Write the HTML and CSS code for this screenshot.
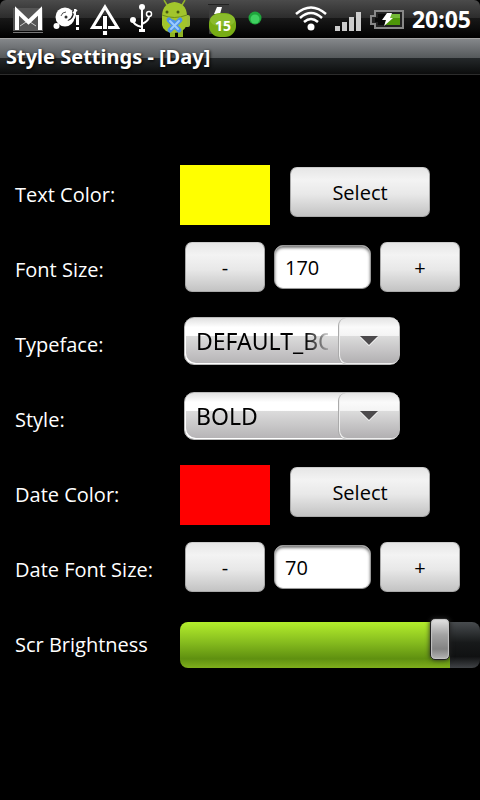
FILE: index.html
```html
<!DOCTYPE html>
<html lang="en">
<head>
    <meta charset="UTF-8">
    <meta name="viewport" content="width=device-width, initial-scale=1.0">
    <title>Style Settings</title>

    <link rel="stylesheet" href="styles.css">

</head>
<body>

    <div class="status-bar">

        <div class="notifications">
            <!-- mail -->
            <svg width="32" height="38" viewBox="12 0 32 38">
                <rect x="13" y="8" width="30" height="23" fill="#555"/>
                <path d="M13 32.500h30" stroke="#777" stroke-width="1"/>
                <path d="M20 26l6-4M36 26l-6-4" stroke="#ccc" stroke-width="1"/>
                <path d="M17 30V11l11.500 11L40 11v19" fill="none" stroke="#fff" stroke-width="4"/>
            </svg>
            <!-- disc warning -->
            <svg width="29" height="38" viewBox="52 0 29 38">
                <circle cx="65" cy="17" r="9.500" fill="#fff"/>
                <path d="M61 16q1-4 5-4" fill="none" stroke="#555" stroke-width="1"/>
                <circle cx="66" cy="17" r="1.500" fill="#333"/>
                <path d="M73 11v4q-1 4-5 6" fill="none" stroke="#222" stroke-width="1.500"/>
                <path d="M75 9v6q-1 5-7 7M73 13l4-3" fill="none" stroke="#fff" stroke-width="2"/>
                <circle cx="56.500" cy="26" r="3" fill="#fff"/>
                <path d="M77.500 15v10M77.500 27v3" stroke="#fff" stroke-width="3"/>
            </svg>
            <!-- alert -->
            <svg width="32" height="38" viewBox="89 0 32 38">
                <path d="M105 7l12.500 20.500h-25z" fill="none" stroke="#fff" stroke-width="3"/>
                <path d="M105 15v20" stroke="#111" stroke-width="6"/>
                <path d="M105 16v13M105 31v4" stroke="#fff" stroke-width="4"/>
            </svg>
            <!-- usb -->
            <svg width="24" height="38" viewBox="129 0 24 38">
                <path d="M142 6v25M133 20q0 5 9 7M149 14v2q0 5-7 8" fill="none" stroke="#fff" stroke-width="2"/>
                <circle cx="142" cy="7" r="3" fill="#fff"/>
                <circle cx="133" cy="20" r="3" fill="#fff"/>
                <circle cx="149" cy="14" r="2.500" fill="#111" stroke="#fff" stroke-width="1.500"/>
                <path d="M139 30.500h6" stroke="#fff" stroke-width="3"/>
            </svg>
            <!-- robot -->
            <svg width="38" height="38" viewBox="161 0 38 38">
                <path d="M167 5l-3-5M182 5l3-5" stroke="#93b52a" stroke-width="1.500"/>
                <rect x="184" y="15" width="6" height="12" rx="2" fill="#9cbd3c"/>
                <path d="M170 28h5v9h-5zM178 28h5v9h-5z" fill="#8fb424"/>
                <path d="M162 15q1-12 12.500-13Q186 3 187 15v10q-4 8-13 8-11-1-12-8z" fill="#a2c52c"/>
                <path d="M162 15q12 5 25 0" fill="none" stroke="#6f8f1a" stroke-width="1"/>
                <circle cx="167" cy="12" r="1.500" fill="#465b12"/>
                <circle cx="178" cy="12" r="1.500" fill="#465b12"/>
                <path d="M169 20l5 2" stroke="#4f94e8" stroke-width="4" stroke-linecap="round"/>
                <path d="M169 20l10 10M180 20l-10 10" stroke="#4f94e8" stroke-width="5" stroke-linecap="round"/>
                <path d="M170 21l8 8M179 21l-8 8" stroke="#9ccbff" stroke-width="2" stroke-linecap="round"/>
            </svg>
            <!-- battery level badge -->
            <svg width="30" height="38" viewBox="207 0 30 38">
                <rect x="209" y="5" width="20" height="29" rx="1" fill="#3c3c3c"/>
                <path d="M208 4.500h21" stroke="#222" stroke-width="1"/>
                <path d="M217 7h5l-2 7h-6z" fill="#fff"/>
                <rect x="209" y="13" width="27" height="24" rx="11" fill="#78ad15"/>
                <rect x="210" y="14" width="25" height="12" rx="9" fill="#8abb2c"/>
                <text x="223" y="31" class="badge-text">15</text>
            </svg>
            <!-- online dot -->
            <svg width="17" height="38" viewBox="245 0 17 38">
                <circle cx="255" cy="18" r="6.500" fill="#1fa53c"/>
                <circle cx="255" cy="19" r="4.500" fill="#3fd060"/>
            </svg>
        </div>

        <div class="system-icons">
            <!-- wifi -->
            <svg width="32" height="38" viewBox="295 0 32 38">
                <circle cx="311" cy="27" r="3.500" fill="#fff"/>
                <path d="M296 14q15-13 30 0M300 18q11-10 22 0M304 22q7-6 14 0" fill="none" stroke="#fff" stroke-width="2.500"/>
            </svg>
            <!-- signal -->
            <svg width="27" height="38" viewBox="336 0 27 38">
                <path d="M336 26h5v5h-5zM343 22h5v9h-5zM350 17h5v14h-5zM357 12h5v19h-5z" fill="#ccc"/>
            </svg>
            <!-- battery -->
            <svg width="34" height="38" viewBox="370 0 34 38">
                <path d="M375 11h28v17h-28v-4h-4v-8h4z" fill="#222" stroke="#888" stroke-width="2"/>
                <path d="M378 14h9v11h-9v-3h-3v-4h3z" fill="#0a0a0a"/>
                <path d="M387 14h13v11h-15z" fill="#4d9608"/>
                <path d="M387 14h13v4h-13z" fill="#74b936"/>
                <path d="M387 13h5l-2 5h3l-9 8 2-6h-4z" fill="#fff"/>
            </svg>
            <span class="clock">20:05</span>
        </div>

    </div>

    <h1 class="title-bar">Style Settings - [Day]</h1>

    <form class="settings">

        <div class="row">
            <label for="textColor">Text Color:</label>
            <div class="controls">
                <div class="swatch yellow"></div>
                <button type="button" id="textColor" class="btn select-btn">Select</button>
            </div>
        </div>

        <div class="row">
            <label for="fontSize">Font Size:</label>
            <div class="controls stepper">
                <button type="button" class="btn">-</button>
                <input type="text" id="fontSize" class="number" value="170">
                <button type="button" class="btn">+</button>
            </div>
        </div>

        <div class="row">
            <label for="typeface">Typeface:</label>
            <div class="controls">
                <div class="spinner">
                    <select id="typeface">
                        <option>DEFAULT_BOLD</option>
                    </select>
                    <span class="arrow"></span>
                </div>
            </div>
        </div>

        <div class="row">
            <label for="style">Style:</label>
            <div class="controls">
                <div class="spinner">
                    <select id="style">
                        <option>BOLD</option>
                    </select>
                    <span class="arrow"></span>
                </div>
            </div>
        </div>

        <div class="row">
            <label for="dateColor">Date Color:</label>
            <div class="controls">
                <div class="swatch red"></div>
                <button type="button" id="dateColor" class="btn select-btn">Select</button>
            </div>
        </div>

        <div class="row">
            <label for="dateFontSize">Date Font Size:</label>
            <div class="controls stepper">
                <button type="button" class="btn">-</button>
                <input type="text" id="dateFontSize" class="number" value="70">
                <button type="button" class="btn">+</button>
            </div>
        </div>

        <div class="row">
            <label for="brightness">Scr Brightness</label>
            <div class="controls">
                <input type="range" id="brightness" class="slider" min="0" max="255" value="228">
            </div>
        </div>

    </form>

</body>
</html>
```
FILE: styles.css
```css
*{
    box-sizing: border-box;
}

body{
    margin: 0;
    min-height: 100vh;
    background-color: #000;
    color: #fff;
    font-family: "Open Sans", "Noto Sans", sans-serif;
    font-size: 20px;
}

/* status bar */

.status-bar{
    display: flex;
    justify-content: space-between;
    height: 38px;
    padding: 0 9px 0 12px;
    border-radius: 6px 6px 0 0;
    background: linear-gradient(#4b4b4b, #2c2c2c 47%, #181818 48%, #000);
    font-family: "Noto Sans", sans-serif;
}

.notifications, .system-icons{
    display: flex;
    align-items: center;
    gap: 8px;
}

.status-bar svg{
    display: block;
    flex: none;
}

.badge-text{
    fill: #fff;
    font-size: 14px;
    font-weight: bold;
    text-anchor: middle;
}

.clock{
    font-size: 23px;
    font-weight: bold;
    line-height: 38px;
}

/* title */

.title-bar{
    height: 37px;
    margin: 0;
    padding: 0 6px;
    border-top: 1px solid #a5a5a5;
    border-bottom: 1px solid #2c2c2c;
    background: linear-gradient(#84878a, #55595b 54%, #24282a 55%, #0b0c0c);
    font-family: "Noto Sans", sans-serif;
    font-size: 20px;
    line-height: 35px;
    text-shadow: 1px 1px 3px #000;
}

/* settings rows */

.settings{
    padding-top: 75px;
}

.row{
    display: grid;
    grid-template-columns: 165px 1fr;
    height: 75px;
    padding: 15px 0 0 15px;
}

.row label{
    line-height: 60px;
    white-space: nowrap;
}

.controls{
    display: flex;
    align-items: flex-start;
}

.swatch{
    width: 90px;
    height: 60px;
    margin-right: 20px;
}

.yellow{
    background-color: #ff0;
}

.red{
    background-color: #f00;
}

.btn{
    width: 80px;
    height: 50px;
    margin-top: 2px;
    padding: 0;
    border: 1px solid #aaa;
    border-top-color: #ccc;
    border-radius: 7px;
    background: linear-gradient(#e6e6e6, #f3f3f3 25%, #e8e8e8 55%, #c3c3c3);
    color: #000;
    font-family: inherit;
    font-size: 20px;
}

.select-btn{
    width: 140px;
}

.stepper{
    gap: 9px;
    padding-left: 5px;
}

.number{
    width: 97px;
    height: 44px;
    margin-top: 5px;
    padding: 0 10px;
    border: 1px solid #999;
    border-radius: 9px;
    background-color: #fff;
    box-shadow: inset 0 2px 3px #777;
    color: #000;
    font-family: inherit;
    font-size: 20px;
}

/* drop-downs */

.spinner{
    position: relative;
    width: 216px;
    height: 48px;
    margin: 2px 0 0 4px;
    border: 1px solid #bbb;
    border-radius: 10px;
    background: linear-gradient(#e0e0e0, #fff 20%, #fff 38%, #dcdcdc 39%, #b5b3b5);
    box-shadow: inset 2px -2px 0 -1px #fff;
}

.spinner select{
    width: 143px;
    height: 46px;
    padding: 0 0 0 11px;
    border: 0;
    appearance: none;
    /* text fades out before it reaches the arrow */
    background: linear-gradient(to right, #000 120px, transparent 148px);
    -webkit-background-clip: text;
    background-clip: text;
    color: transparent;
    font-family: "Noto Sans", sans-serif;
    font-size: 23px;
}

.spinner option{
    color: #000;
}

.arrow{
    position: absolute;
    top: 0;
    right: 0;
    width: 61px;
    height: 46px;
    border-left: 1px solid #aaa;
    border-radius: 8px;
    background: linear-gradient(#e4e4e4, #fafafa 20%, #f4f4f4 38%, #dcdcdc 39%, #b0aeb0);
    box-shadow: inset 1px -1px 0 #eee;
    pointer-events: none;
}

.arrow::after{
    content: "";
    position: absolute;
    top: 18px;
    left: 21px;
    border: 9px solid transparent;
    border-top-color: #4c4a4c;
    border-bottom: 0;
    filter: drop-shadow(0 1px 0 #fff);
}

/* brightness slider */

.slider{
    width: 100%;
    height: 46px;
    margin: 7px 0 0;
    border-radius: 8px;
    appearance: none;
    background:
    linear-gradient(#b4ee2c, #85bb1e 45%, #5f9010 80%, #7fae1c) left / 90% 100% no-repeat,
    linear-gradient(#484c4f, #17191a 45%, #101112 75%, #404346);
}

.slider::-webkit-slider-runnable-track{
    height: 46px;
}

.slider::-webkit-slider-thumb{
    appearance: none;
    width: 20px;
    height: 42px;
    margin-top: -4px;
    border: 1px solid #222;
    border-radius: 5px;
    background: linear-gradient(#e4e4e4, #a2a2a2 40%, #838383 75%, #b5b5b5);
    box-shadow: inset 0 0 1px 1px #c4c4c4, 0 0 5px #222;
}
```
